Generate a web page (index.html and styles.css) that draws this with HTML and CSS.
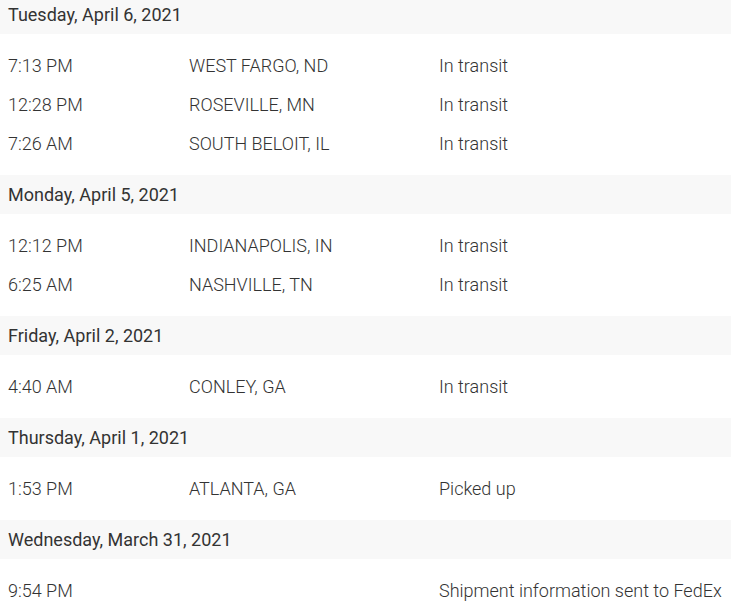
FILE: index.html
```html
<!DOCTYPE html>
<html>
<head>
<meta charset="utf-8">
<link rel="stylesheet" href="styles.css">
</head>
<body>
<div class="history">
  <div class="day">
    <div class="day-head">Tuesday, April 6, 2021</div>
    <div class="events">
      <div class="event"><span class="time">7:13 PM</span><span class="loc">WEST FARGO, ND</span><span class="status">In transit</span></div>
      <div class="event"><span class="time">12:28 PM</span><span class="loc">ROSEVILLE, MN</span><span class="status">In transit</span></div>
      <div class="event"><span class="time">7:26 AM</span><span class="loc">SOUTH BELOIT, IL</span><span class="status">In transit</span></div>
    </div>
  </div>
  <div class="day">
    <div class="day-head">Monday, April 5, 2021</div>
    <div class="events">
      <div class="event"><span class="time">12:12 PM</span><span class="loc">INDIANAPOLIS, IN</span><span class="status">In transit</span></div>
      <div class="event"><span class="time">6:25 AM</span><span class="loc">NASHVILLE, TN</span><span class="status">In transit</span></div>
    </div>
  </div>
  <div class="day">
    <div class="day-head">Friday, April 2, 2021</div>
    <div class="events">
      <div class="event"><span class="time">4:40 AM</span><span class="loc">CONLEY, GA</span><span class="status">In transit</span></div>
    </div>
  </div>
  <div class="day">
    <div class="day-head">Thursday, April 1, 2021</div>
    <div class="events">
      <div class="event"><span class="time">1:53 PM</span><span class="loc">ATLANTA, GA</span><span class="status">Picked up</span></div>
    </div>
  </div>
  <div class="day">
    <div class="day-head">Wednesday, March 31, 2021</div>
    <div class="events">
      <div class="event"><span class="time">9:54 PM</span><span class="loc"></span><span class="status">Shipment information sent to FedEx</span></div>
    </div>
  </div>
</div>
</body>
</html>
```
FILE: styles.css
```css
html, body {
  margin: 0;
  padding: 0;
  background: #ffffff;
}
body {
  font-family: Roboto, "Liberation Sans", sans-serif;
  overflow: hidden;
}
.history {
  margin-top: -5px;
  display: flex;
  flex-direction: column;
}
.day-head {
  background: #f8f8f8;
  height: 39px;
  display: flex;
  align-items: center;
  padding-left: 8px;
  font-size: 18px;
  font-weight: 400;
  color: #333333;
}
.events {
  padding: 12px 0;
}
.event {
  height: 39px;
  display: grid;
  grid-template-columns: 181px 250px 1fr;
  align-items: center;
  padding-left: 8px;
  font-size: 18px;
  font-weight: 300;
  color: #333333;
  white-space: nowrap;
}
```
